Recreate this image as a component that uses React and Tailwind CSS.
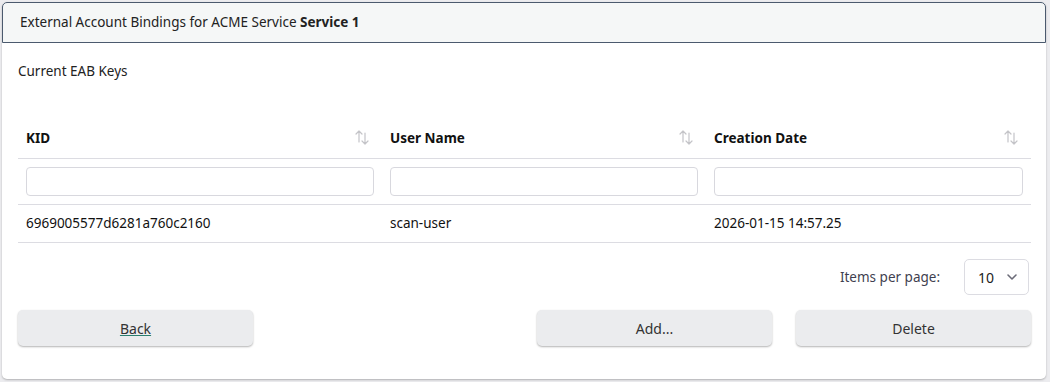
import React from "react";

function SortIcon() {
  return (
    <svg width="16" height="18" viewBox="0 0 16 18" fill="none" stroke="#c4c4c8" strokeWidth="1.2" strokeLinecap="round" strokeLinejoin="round" className="-mt-[4px]">
      <path d="M5 14V3M2 6l3-3 3 3" />
      <path d="M11 5v11M8 13l3 3 3-3" />
    </svg>
  );
}

export default function App() {
  const font = { fontFamily: '"Noto Sans", "Open Sans", sans-serif' };
  return (
    <div className="w-[1050px] h-[382px] bg-[#ececef] pl-[2px] pt-[2px]" style={font}>
      <div className="w-[1044px] h-[377px] bg-white rounded-[5px] shadow-[0_1px_2px_rgba(0,0,0,0.25)] flex flex-col">
        <div className="h-[41px] bg-[#f5f7f7] border border-[#4b5a6e] rounded-t-[5px] flex items-center pl-[17px] text-[13.5px] text-[#222]">
          <span>External Account Bindings for ACME Service&nbsp;</span>
          <span className="font-bold">Service 1</span>
        </div>
        <div className="px-4">
          <div className="mt-[18px] text-[13.5px] text-[#222] leading-[20px]">Current EAB Keys</div>
          <div className="mt-[38px] grid grid-cols-[364px_324px_325px] text-[13.5px] text-[#111]">
            <div className="h-[40px] flex items-center justify-between pl-2 pr-[12px] border-b border-[#dcdce2] font-bold">
              <span>KID</span><SortIcon />
            </div>
            <div className="h-[40px] flex items-center justify-between pl-2 pr-[12px] border-b border-[#dcdce2] font-bold">
              <span>User Name</span><SortIcon />
            </div>
            <div className="h-[40px] flex items-center justify-between pl-2 pr-[12px] border-b border-[#dcdce2] font-bold">
              <span>Creation Date</span><SortIcon />
            </div>
            {[0, 1, 2].map((i) => (
              <div key={i} className="h-[46px] flex items-center px-2 border-b border-[#dcdce2]">
                <div className="w-full h-[29px] border border-[#d8d8de] rounded-[4px] bg-white" />
              </div>
            ))}
            <div className="h-[38px] flex items-center px-2 border-b border-[#dcdce2]">6969005577d6281a760c2160</div>
            <div className="h-[38px] flex items-center px-2 border-b border-[#dcdce2]">scan-user</div>
            <div className="h-[38px] flex items-center px-2 border-b border-[#dcdce2]">2026-01-15 14:57.25</div>
          </div>
          <div className="mt-[16px] flex items-center justify-end pr-[1px] gap-6 text-[13.5px]">
            <span className="text-[#3f3f50]">Items per page:</span>
            <div className="w-[65px] h-[36px] border border-[#dcdce2] rounded-[5px] flex items-center pl-[13px] gap-[12px] text-[#222] text-[14px]">
              <span>10</span>
              <svg width="12" height="8" viewBox="0 0 12 8" fill="none" stroke="#6b6b78" strokeWidth="1.6" strokeLinecap="round" strokeLinejoin="round">
                <path d="M2 2l4 4 4-4" />
              </svg>
            </div>
          </div>
          <div className="mt-[15px] flex items-center text-[14px] text-[#333]">
            <button className="w-[235px] h-[36px] bg-[#ebecee] rounded-[5px] shadow-[0_1px_2px_rgba(0,0,0,0.3)] underline decoration-[#2a7f6f]">Back</button>
            <div className="flex-1" />
            <button className="w-[235px] h-[36px] bg-[#ebecee] rounded-[5px] shadow-[0_1px_2px_rgba(0,0,0,0.3)]">Add...</button>
            <button className="ml-[24px] mr-[-1px] w-[235px] h-[36px] bg-[#ebecee] rounded-[5px] shadow-[0_1px_2px_rgba(0,0,0,0.3)]">Delete</button>
          </div>
        </div>
      </div>
    </div>
  );
}
